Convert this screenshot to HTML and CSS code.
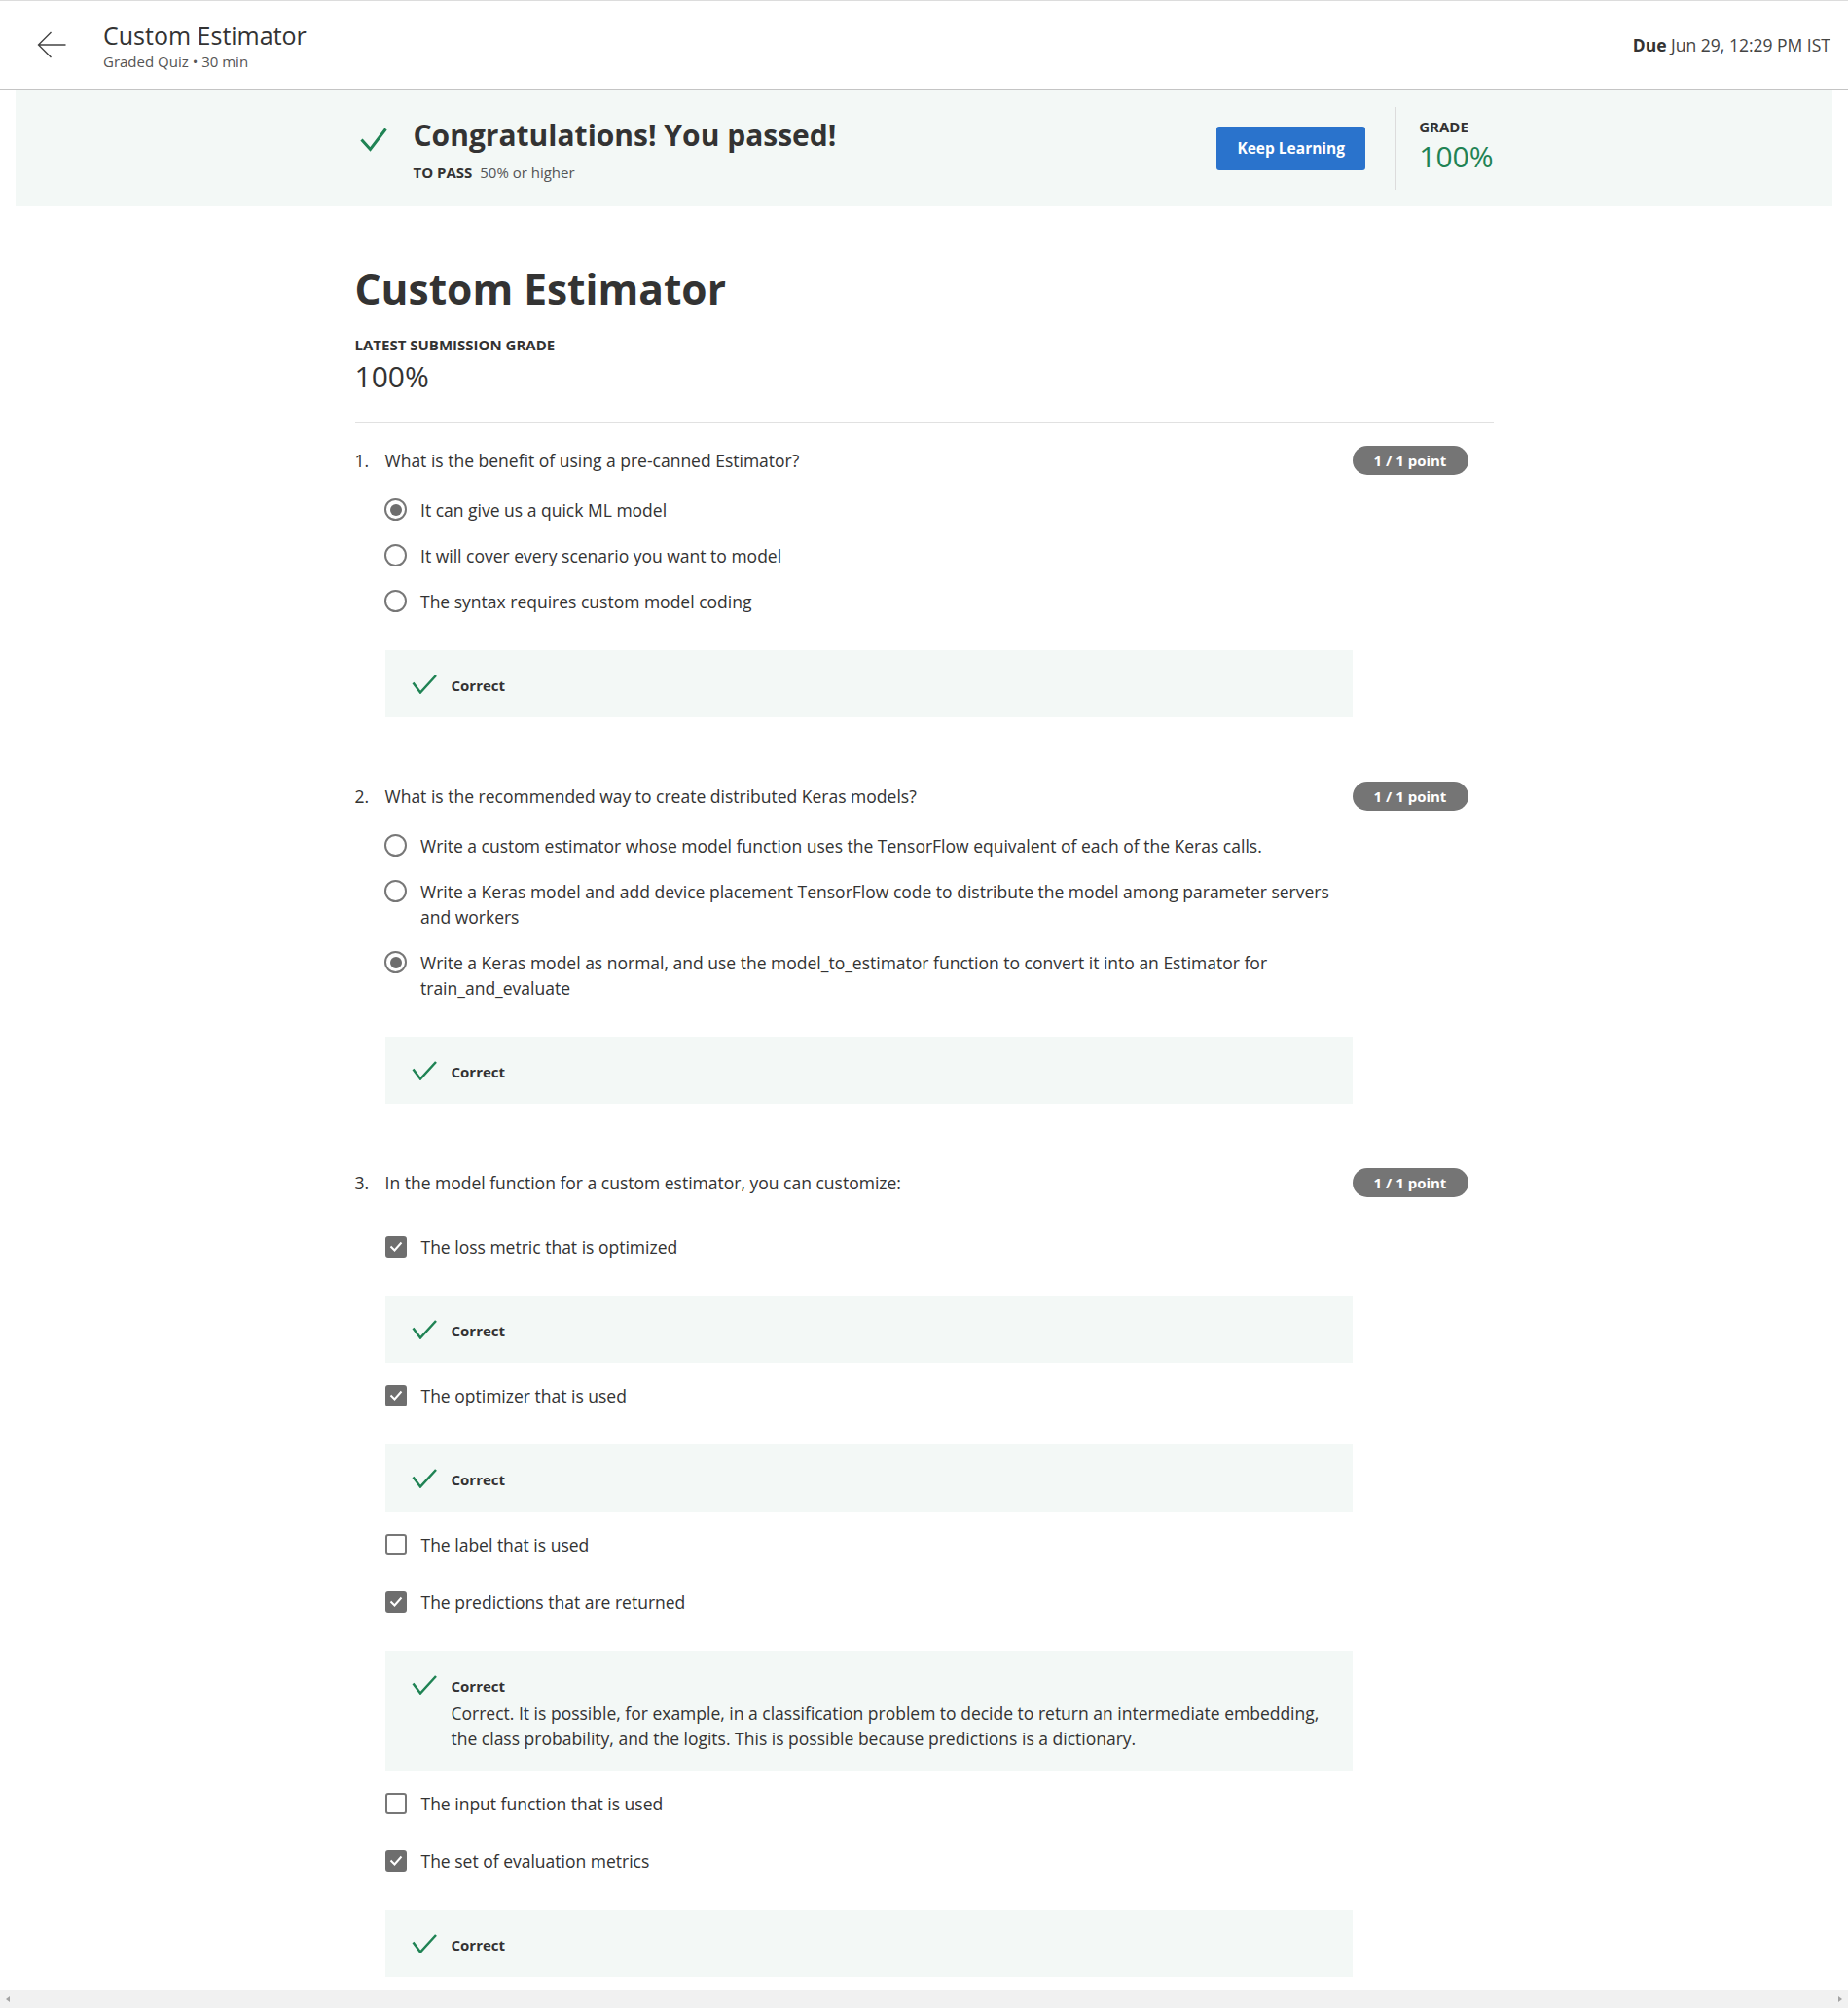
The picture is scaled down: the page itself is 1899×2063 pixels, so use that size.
FILE: index.html
```html
<!DOCTYPE html>
<html lang="en">
<head>
<meta charset="utf-8">
<title>Custom Estimator</title>
<link rel="stylesheet" href="styles.css">
</head>
<body>
<header class="topbar">
  <div class="topbar-left">
    <svg class="back" width="30" height="28" viewBox="0 0 30 28"><path d="M29.5 14H1.5M14.5 1L1.5 14L14.5 27" fill="none" stroke="#444" stroke-width="1.4"/></svg>
    <div>
      <div class="title">Custom Estimator</div>
      <div class="sub">Graded Quiz • 30 min</div>
    </div>
  </div>
  <div class="due"><b>Due</b> Jun 29, 12:29 PM IST</div>
</header>

<section class="banner">
  <div class="banner-inner">
    <div class="pass">
      <svg class="pass-check" width="28" height="25" viewBox="0 0 28 25"><path d="M1.5 12.5L10.5 22.5L26.5 1.5" fill="none" stroke="#1f8354" stroke-width="3"/></svg>
      <div>
        <h2 class="pass-title">Congratulations! You passed!</h2>
        <div class="to-pass"><b>TO PASS</b> 50% or higher</div>
      </div>
    </div>
    <div class="banner-right">
      <button class="btn">Keep Learning</button>
      <div class="vdiv"></div>
      <div class="grade">
        <div class="grade-lbl">GRADE</div>
        <div class="grade-val">100%</div>
      </div>
    </div>
  </div>
</section>

<main class="content">
  <h1 class="page-title">Custom Estimator</h1>
  <div class="lsg">LATEST SUBMISSION GRADE</div>
  <div class="lsg-val">100%</div>
  <div class="rule"></div>

  <div class="question">
    <div class="q-head">
      <div class="q-num">1.</div>
      <div class="q-text">What is the benefit of using a pre-canned Estimator?</div>
      <div class="badge">1 / 1 point</div>
    </div>
    <div class="options">
      <div class="opt"><span class="radio on"></span><span class="opt-text">It can give us a quick ML model</span></div>
      <div class="opt"><span class="radio"></span><span class="opt-text">It will cover every scenario you want to model</span></div>
      <div class="opt"><span class="radio"></span><span class="opt-text">The syntax requires custom model coding</span></div>
      <div class="feedback">
        <svg class="fb-icon" width="26" height="20" viewBox="0 0 26 20"><path d="M1.5 8.5L9 18.5L25 1" fill="none" stroke="#1f8354" stroke-width="2.5"/></svg>
        <div><div class="fb-title">Correct</div></div>
      </div>
    </div>
  </div>

  <div class="question">
    <div class="q-head">
      <div class="q-num">2.</div>
      <div class="q-text">What is the recommended way to create distributed Keras models?</div>
      <div class="badge">1 / 1 point</div>
    </div>
    <div class="options">
      <div class="opt"><span class="radio"></span><span class="opt-text">Write a custom estimator whose model function uses the TensorFlow equivalent of each of the Keras calls.</span></div>
      <div class="opt"><span class="radio"></span><span class="opt-text">Write a Keras model and add device placement TensorFlow code to distribute the model among parameter servers and workers</span></div>
      <div class="opt"><span class="radio on"></span><span class="opt-text">Write a Keras model as normal, and use the model_to_estimator function to convert it into an Estimator for train_and_evaluate</span></div>
      <div class="feedback">
        <svg class="fb-icon" width="26" height="20" viewBox="0 0 26 20"><path d="M1.5 8.5L9 18.5L25 1" fill="none" stroke="#1f8354" stroke-width="2.5"/></svg>
        <div><div class="fb-title">Correct</div></div>
      </div>
    </div>
  </div>

  <div class="question">
    <div class="q-head">
      <div class="q-num">3.</div>
      <div class="q-text">In the model function for a custom estimator, you can customize:</div>
      <div class="badge">1 / 1 point</div>
    </div>
    <div class="options multi">
      <div class="opt"><span class="cbox on"><svg width="14" height="11" viewBox="0 0 14 11"><path d="M1.5 5.5L5.5 9.5L12.5 1.5" fill="none" stroke="#fff" stroke-width="2"/></svg></span><span class="opt-text">The loss metric that is optimized</span></div>
      <div class="feedback">
        <svg class="fb-icon" width="26" height="20" viewBox="0 0 26 20"><path d="M1.5 8.5L9 18.5L25 1" fill="none" stroke="#1f8354" stroke-width="2.5"/></svg>
        <div><div class="fb-title">Correct</div></div>
      </div>
      <div class="opt"><span class="cbox on"><svg width="14" height="11" viewBox="0 0 14 11"><path d="M1.5 5.5L5.5 9.5L12.5 1.5" fill="none" stroke="#fff" stroke-width="2"/></svg></span><span class="opt-text">The optimizer that is used</span></div>
      <div class="feedback">
        <svg class="fb-icon" width="26" height="20" viewBox="0 0 26 20"><path d="M1.5 8.5L9 18.5L25 1" fill="none" stroke="#1f8354" stroke-width="2.5"/></svg>
        <div><div class="fb-title">Correct</div></div>
      </div>
      <div class="opt"><span class="cbox"></span><span class="opt-text">The label that is used</span></div>
      <div class="opt"><span class="cbox on"><svg width="14" height="11" viewBox="0 0 14 11"><path d="M1.5 5.5L5.5 9.5L12.5 1.5" fill="none" stroke="#fff" stroke-width="2"/></svg></span><span class="opt-text">The predictions that are returned</span></div>
      <div class="feedback">
        <svg class="fb-icon" width="26" height="20" viewBox="0 0 26 20"><path d="M1.5 8.5L9 18.5L25 1" fill="none" stroke="#1f8354" stroke-width="2.5"/></svg>
        <div>
          <div class="fb-title">Correct</div>
          <div class="fb-text">Correct. It is possible, for example, in a classification problem to decide to return an intermediate embedding, the class probability, and the logits. This is possible because predictions is a dictionary.</div>
        </div>
      </div>
      <div class="opt"><span class="cbox"></span><span class="opt-text">The input function that is used</span></div>
      <div class="opt"><span class="cbox on"><svg width="14" height="11" viewBox="0 0 14 11"><path d="M1.5 5.5L5.5 9.5L12.5 1.5" fill="none" stroke="#fff" stroke-width="2"/></svg></span><span class="opt-text">The set of evaluation metrics</span></div>
      <div class="feedback">
        <svg class="fb-icon" width="26" height="20" viewBox="0 0 26 20"><path d="M1.5 8.5L9 18.5L25 1" fill="none" stroke="#1f8354" stroke-width="2.5"/></svg>
        <div><div class="fb-title">Correct</div></div>
      </div>
    </div>
  </div>
</main>

<div class="hscroll"><span class="arr-l"></span><span class="arr-r"></span></div>
</body>
</html>
```

FILE: styles.css
```css
html, body {
  margin: 0;
  padding: 0;
}
html {
  overflow: hidden;
}
body {
  font-family: "Open Sans", "Liberation Sans", sans-serif;
  color: #333;
  background: #fff;
}

/* top bar */
.topbar {
  display: flex;
  justify-content: space-between;
  align-items: flex-start;
  height: 90px;
  border-top: 1px solid #dcdcdc;
  border-bottom: 1px solid #c4c4c4;
}
.topbar-left {
  display: flex;
  align-items: flex-start;
  padding-top: 18px;
}
.back {
  margin: 13px 38px 0 38px;
  flex: none;
}
.title {
  font-size: 25px;
  line-height: 34px;
  color: #333;
}
.sub {
  font-size: 15px;
  line-height: 20px;
  color: #555;
}
.due {
  font-size: 17.5px;
  line-height: 22px;
  margin: 34px 18px 0 0;
  color: #444;
}
.due b {
  color: #333;
}

/* banner */
.banner {
  margin: 0 16px;
  height: 120px;
  background: #f3f8f6;
}
.banner-inner {
  width: 1170px;
  height: 120px;
  margin: 0 auto;
  display: flex;
  justify-content: space-between;
  align-items: center;
}
.pass {
  align-self: flex-start;
  display: flex;
  align-items: flex-start;
  padding-top: 29px;
}
.pass-check {
  margin: 10px 27px 0 5px;
  flex: none;
}
.pass-title {
  margin: 0;
  font-size: 30px;
  line-height: 36px;
  font-weight: 700;
  color: #333;
}
.to-pass {
  margin-top: 10px;
  font-size: 15px;
  line-height: 20px;
  color: #555;
}
.to-pass b {
  font-size: 15px;
  color: #333;
  margin-right: 4px;
}
.banner-right {
  display: flex;
  align-items: center;
}
.btn {
  width: 153px;
  height: 45px;
  background: #2a73cc;
  color: #fff;
  font-family: inherit;
  font-weight: 700;
  font-size: 15.5px;
  border: none;
  border-radius: 3px;
  margin-right: 31px;
  padding: 0;
}
.vdiv {
  width: 1px;
  height: 85px;
  background: #dcdcdc;
  margin-right: 23px;
}
.grade {
  margin-bottom: 3px;
}
.grade-lbl {
  font-size: 15px;
  font-weight: 700;
  line-height: 20px;
  color: #333;
}
.grade-val {
  font-size: 30px;
  line-height: 41px;
  color: #1f8354;
}

/* content */
.content {
  width: 1170px;
  margin: 0 auto;
}
.page-title {
  margin: 60px 0 0;
  font-size: 42.5px;
  line-height: 50px;
  font-weight: 700;
  color: #333;
}
.lsg {
  margin-top: 22px;
  font-size: 15px;
  font-weight: 700;
  line-height: 20px;
  color: #333;
}
.lsg-val {
  margin-top: 5px;
  font-size: 30px;
  line-height: 36px;
  color: #333;
}
.rule {
  margin-top: 29px;
  height: 1px;
  background: #e1e1e1;
}

.question {
  padding: 23px 0 43px;
}
.q-head {
  display: flex;
  align-items: center;
  font-size: 17.5px;
  line-height: 26px;
}
.q-num {
  width: 31px;
  flex: none;
}
.q-text {
  flex: 1;
}
.badge {
  flex: none;
  width: 119px;
  height: 30px;
  border-radius: 15px;
  background: #757575;
  color: #fff;
  font-size: 15px;
  font-weight: 700;
  display: flex;
  align-items: center;
  justify-content: center;
  margin-right: 26px;
}

.options {
  margin: 12px 0 0 31px;
  width: 994px;
}
.opt {
  display: flex;
  align-items: flex-start;
  padding: 10.5px 0;
  font-size: 17.5px;
  line-height: 26px;
}
.radio {
  flex: none;
  width: 23px;
  height: 23px;
  box-sizing: border-box;
  border: 2px solid #777;
  border-radius: 50%;
  margin: 1.5px 14px 0 -0.5px;
  position: relative;
}
.radio.on::after {
  content: "";
  position: absolute;
  left: 3.5px;
  top: 3.5px;
  width: 12px;
  height: 12px;
  border-radius: 50%;
  background: #6e6e6e;
}
.cbox {
  flex: none;
  width: 22px;
  height: 22px;
  box-sizing: border-box;
  border: 2px solid #777;
  border-radius: 3px;
  margin: 2px 15px 0 0;
  display: flex;
  align-items: center;
  justify-content: center;
}
.cbox.on {
  background: #6e6e6e;
  border-color: #6e6e6e;
}

.feedback {
  margin-top: 27px;
  background: #f3f8f6;
  padding: 23px 30px 20px 27px;
  display: flex;
  align-items: flex-start;
}
.fb-icon {
  flex: none;
  margin: 2px 15px 0 0;
}
.fb-title {
  font-size: 15px;
  font-weight: 700;
  line-height: 26px;
  color: #333;
}
.fb-text {
  margin-top: 2px;
  font-size: 17.5px;
  line-height: 26px;
  color: #333;
}

.options.multi {
  margin-top: 21px;
}
.options.multi .opt {
  padding: 16.5px 0;
}
.options.multi .feedback {
  margin: 21px 0 4px;
}

/* fake horizontal scrollbar */
.hscroll {
  position: fixed;
  left: 0;
  right: 0;
  bottom: 0;
  height: 18px;
  background: #f1f1f1;
}
.arr-l, .arr-r {
  position: absolute;
  top: 6px;
  width: 0;
  height: 0;
  border-top: 3.5px solid transparent;
  border-bottom: 3.5px solid transparent;
}
.arr-l {
  left: 6px;
  border-right: 4px solid #a3a3a3;
}
.arr-r {
  right: 6px;
  border-left: 4px solid #a3a3a3;
}
```
